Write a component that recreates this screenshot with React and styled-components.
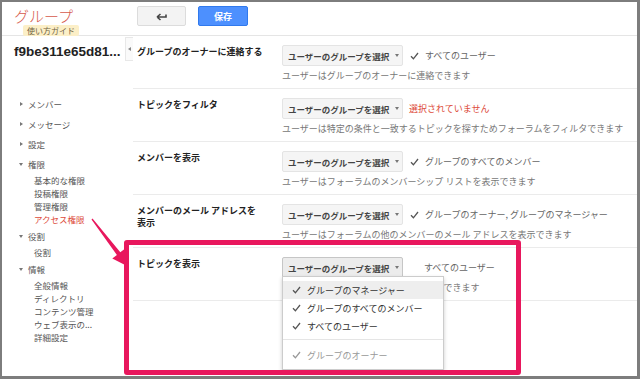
import styled, { createGlobalStyle } from 'styled-components'

const GlobalStyle = createGlobalStyle`
  html, body {
    margin: 0;
    padding: 0;
    background: #fff;
  }
  body {
    font-family: "Liberation Sans", "Noto Sans CJK JP", sans-serif;
  }
`;

const Frame = styled.div`
  position: relative;
  width: 640px;
  height: 379px;
  box-sizing: border-box;
  border: solid #7d7d7d;
  border-width: 2px 3px 3px 2px;
  overflow: hidden;
  background: #fff;
`;

const Header = styled.header`
  display: flex;
  align-items: flex-start;
  height: 33px;
  border-bottom: 1px solid #e5e5e5;
`;

const Brand = styled.div`
  width: 135px;
  flex: none;
  box-sizing: border-box;
  display: flex;
  flex-direction: column;
  align-items: flex-start;
  padding: 5px 0 0 12px;
`;

const Logo = styled.div`
  font-family: "Noto Sans CJK JP", sans-serif;
  font-size: 15px;
  line-height: 18px;
  font-weight: 300;
  color: #d65a4c;
`;

const Badge = styled.span`
  margin: 0 0 0 9px;
  padding: 0 4px;
  font-family: "Noto Sans CJK JP", sans-serif;
  font-size: 8px;
  line-height: 11px;
  color: #6f5f3f;
  background: #fcefc7;
  border-radius: 2px;
`;

const Button = styled.button`
  display: flex;
  align-items: center;
  justify-content: center;
  margin-top: 4px;
  height: 20px;
  width: ${p => p.$w}px;
  padding: 0;
  box-sizing: border-box;
  border-radius: 2px;
  border: 1px solid ${p => (p.$primary ? '#3079ed' : '#dcdcdc')};
  background: ${p => (p.$primary ? '#4d90fe' : '#f3f3f3')};
  color: ${p => (p.$primary ? '#fff' : '#444')};
  font-family: "Noto Sans CJK JP", sans-serif;
  font-size: 9px;
  font-weight: bold;
  & + & {
    margin-left: 12px;
  }
`;

const Body = styled.div`
  display: flex;
  height: 341px;
`;

const Sidebar = styled.aside`
  width: 131px;
  flex: none;
  color: #555;
`;

const TitleRow = styled.div`
  display: flex;
  align-items: flex-start;
  margin-top: 1px;
  height: 25px;
`;

const GroupTitle = styled.div`
  padding: 6px 0 0 12px;
  font-family: "Liberation Sans", Arial, sans-serif;
  font-size: 13.5px;
  line-height: 18px;
  font-weight: bold;
  color: #222;
`;

const Handle = styled.div`
  margin-left: auto;
  width: 8px;
  height: 24px;
  box-sizing: border-box;
  border: 1px solid #e8e8e8;
  border-right: none;
  background: #fafafa;
  display: flex;
  align-items: center;
  justify-content: center;
  &::before {
    content: "";
    border-right: 3px solid #888;
    border-top: 2.5px solid transparent;
    border-bottom: 2.5px solid transparent;
  }
`;

const Nav = styled.nav`
  margin-top: 32px;
  font-family: "Noto Sans CJK JP", sans-serif;
  font-size: 8.5px;
`;

const NavItem = styled.div`
  display: flex;
  align-items: center;
  height: 20px;
  padding-left: 17px;
`;

const Caret = styled.span`
  width: 0;
  height: 0;
  margin-right: 5px;
  ${p =>
    p.$open
      ? `border-top: 3px solid #777;
         border-left: 2.5px solid transparent;
         border-right: 2.5px solid transparent;`
      : `border-left: 3px solid #777;
         border-top: 2.5px solid transparent;
         border-bottom: 2.5px solid transparent;
         margin-left: 1px;`}
`;

const SubItem = styled.div`
  padding-left: 32px;
  line-height: 13px;
  color: ${p => (p.$active ? '#dd4b39' : '#555')};
`;

const Main = styled.main`
  flex: 1;
  font-family: "Noto Sans CJK JP", sans-serif;
`;

const Row = styled.div`
  display: flex;
  padding: 9px 0 6px 4px;
  border-bottom: 1px solid #ebebeb;
`;

const Label = styled.div`
  width: 145px;
  flex: none;
  margin-top: 1px;
  font-size: 9px;
  line-height: 12px;
  font-weight: bold;
  color: #222;
  white-space: pre-line;
`;

const Content = styled.div`
  display: flex;
  flex-direction: column;
`;

const Controls = styled.div`
  display: flex;
  align-items: center;
  height: 21px;
`;

const SelectWrap = styled.div`
  position: relative;
`;

const Select = styled.div`
  display: flex;
  align-items: center;
  width: 121px;
  height: 21px;
  box-sizing: border-box;
  padding-left: 5px;
  border: 1px solid ${p => (p.$open ? '#c6c6c6' : '#e4e4e4')};
  border-radius: 2px;
  background: ${p => (p.$open ? '#ececec' : '#f5f5f5')};
  font-size: 8.5px;
  font-weight: bold;
  color: #444;
  &::after {
    content: "";
    margin-left: 6px;
    border-top: 3px solid #777;
    border-left: 2.5px solid transparent;
    border-right: 2.5px solid transparent;
  }
`;

const Status = styled.div`
  display: flex;
  align-items: center;
  gap: 6px;
  margin-left: ${p => p.$offset}px;
  font-size: 9px;
  color: ${p => (p.$error ? '#dd4b39' : '#666')};
`;

const Desc = styled.div`
  margin-top: 3px;
  font-size: 9px;
  line-height: 13px;
  color: #777;
`;

const Menu = styled.div`
  position: absolute;
  top: 19px;
  left: 0;
  z-index: 2;
  width: 162px;
  box-sizing: border-box;
  padding: 4px 0 5px;
  background: #fff;
  border: 1px solid rgba(0, 0, 0, 0.2);
  box-shadow: 0 2px 4px rgba(0, 0, 0, 0.2);
`;

const MenuItem = styled.div`
  display: flex;
  align-items: center;
  gap: 6px;
  height: 18px;
  padding-left: 9px;
  font-size: 9px;
  color: ${p => (p.$disabled ? '#999' : '#333')};
  background: ${p => (p.$active ? '#eee' : 'transparent')};
`;

const MenuDivider = styled.div`
  height: 1px;
  margin: 4px 0 6px;
  background: #e5e5e5;
`;

const Highlight = styled.div`
  position: absolute;
  left: 122px;
  top: 238px;
  width: 397px;
  height: 135px;
  box-sizing: border-box;
  border: 5px solid #e8175d;
  border-radius: 3px;
  z-index: 3;
  pointer-events: none;
`;

const ArrowLayer = styled.svg`
  position: absolute;
  left: -2px;
  top: -2px;
  z-index: 4;
  pointer-events: none;
`;

function Check({ color = '#555' }) {
  return (
    <svg width="9" height="8" viewBox="0 0 9 8">
      <path d="M1 4.3 L3.4 6.8 L8 1" fill="none" stroke={color} strokeWidth="1.3" />
    </svg>
  )
}

function BackIcon() {
  return (
    <svg width="12" height="9" viewBox="0 0 12 9">
      <path d="M1 5 L4.5 2 M1 5 L4.5 8 M1 5 H10 V2.5" fill="none" stroke="#444" strokeWidth="1.6" />
    </svg>
  )
}

const rows = [
  {
    label: 'グループのオーナーに連絡する',
    status: 'すべてのユーザー',
    check: true,
    desc: 'ユーザーはグループのオーナーに連絡できます',
  },
  {
    label: 'トピックをフィルタ',
    status: '選択されていません',
    error: true,
    desc: 'ユーザーは特定の条件と一致するトピックを探すためフォーラムをフィルタできます',
  },
  {
    label: 'メンバーを表示',
    status: 'グループのすべてのメンバー',
    check: true,
    desc: 'ユーザーはフォーラムのメンバーシップ リストを表示できます',
  },
  {
    label: 'メンバーのメール アドレスを\n表示',
    status: 'グループのオーナー, グループのマネージャー',
    check: true,
    desc: 'ユーザーはフォーラムの他のメンバーのメール アドレスを表示できます',
  },
  {
    label: 'トピックを表示',
    status: 'すべてのユーザー',
    open: true,
    desc: 'ユーザーはフォーラムのトピックを表示できます',
  },
]

const menuItems = ['グループのマネージャー', 'グループのすべてのメンバー', 'すべてのユーザー']

function Sidebar_() {
  return (
    <Sidebar>
      <TitleRow>
        <GroupTitle>f9be311e65d81...</GroupTitle>
        <Handle />
      </TitleRow>
      <Nav>
        <NavItem><Caret />メンバー</NavItem>
        <NavItem><Caret />メッセージ</NavItem>
        <NavItem><Caret />設定</NavItem>
        <NavItem><Caret $open />権限</NavItem>
        <SubItem>基本的な権限</SubItem>
        <SubItem>投稿権限</SubItem>
        <SubItem>管理権限</SubItem>
        <SubItem $active>アクセス権限</SubItem>
        <NavItem><Caret $open />役割</NavItem>
        <SubItem>役割</SubItem>
        <NavItem><Caret $open />情報</NavItem>
        <SubItem>全般情報</SubItem>
        <SubItem>ディレクトリ</SubItem>
        <SubItem>コンテンツ管理</SubItem>
        <SubItem>ウェブ表示の...</SubItem>
        <SubItem>詳細設定</SubItem>
      </Nav>
    </Sidebar>
  )
}

function App() {
  return (
    <>
      <GlobalStyle />
      <Frame>
        <Header>
          <Brand>
            <Logo>グループ</Logo>
            <Badge>使い方ガイド</Badge>
          </Brand>
          <Button $w={49}><BackIcon /></Button>
          <Button $w={50} $primary>保存</Button>
        </Header>
        <Body>
          <Sidebar_ />
          <Main>
            {rows.map(row => (
              <Row key={row.label}>
                <Label>{row.label}</Label>
                <Content>
                  <Controls>
                    <SelectWrap>
                      <Select $open={row.open}>ユーザーのグループを選択</Select>
                      {row.open && (
                        <Menu>
                          {menuItems.map((item, i) => (
                            <MenuItem key={item} $active={i === 0}>
                              <Check />
                              {item}
                            </MenuItem>
                          ))}
                          <MenuDivider />
                          <MenuItem $disabled>
                            <Check color="#999" />
                            グループのオーナー
                          </MenuItem>
                        </Menu>
                      )}
                    </SelectWrap>
                    <Status $error={row.error} $offset={row.check ? 7 : row.error ? 6 : 21}>
                      {row.check && <Check />}
                      {row.status}
                    </Status>
                  </Controls>
                  <Desc>{row.desc}</Desc>
                </Content>
              </Row>
            ))}
          </Main>
        </Body>
        <Highlight />
        <ArrowLayer width="640" height="379" viewBox="0 0 640 379">
          <polygon
            points="92.5,218.6 120.3,252.3 124.9,248.7 129,267 112.3,258.5 116.9,254.9 91.5,219.4"
            fill="#e8175d"
          />
        </ArrowLayer>
      </Frame>
    </>
  )
}

export default App
